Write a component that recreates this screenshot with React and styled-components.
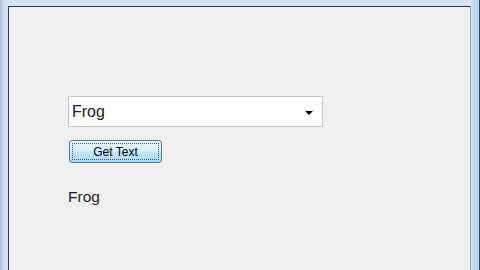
import React from 'react';
import styled, { createGlobalStyle } from 'styled-components';

const GlobalStyle = createGlobalStyle`
  html, body {
    margin: 0;
    padding: 0;
    width: 480px;
    height: 270px;
    overflow: hidden;
    background: #f0f0f0;
  }
`;

// Win7 window frame (light blue glass)
const Frame = styled.div`
  width: 480px;
  height: 270px;
  box-sizing: border-box;
  display: flex;
  padding: 6px 8px 0 8px;
  border-right: 1px solid #3d4a5a;
  background:
    linear-gradient(90deg, #aebdcf 0px, #c9dbef 3px, #d6e5f6 8px, #d6e5f6 calc(100% - 8px), #c3d9f1 calc(100% - 6px), #b6d2f0 100%);
`;

// client area
const Client = styled.div`
  flex: 1;
  display: flex;
  flex-direction: column;
  align-items: flex-start;
  background: #f0f0f0;
  border-top: 1px solid #2f3a47;
  border-left: 1px solid #2f3a47;
  border-right: 1px solid #9aa5b3;
  padding: 89px 0 0 59px;
`;

const Combo = styled.div`
  width: 255px;
  height: 31px;
  box-sizing: border-box;
  display: flex;
  align-items: center;
  justify-content: space-between;
  padding: 0 9px 0 3px;
  background: #fff;
  border: 1px solid #c3c3c3;
  font-family: "Liberation Sans", Arial, sans-serif;
  font-size: 16px;
  color: #1a1a1a;
`;

const Arrow = styled.span`
  width: 0;
  height: 0;
  border-left: 4px solid transparent;
  border-right: 4px solid transparent;
  border-top: 4px solid #000;
  margin-top: 2px;
`;

const Button = styled.button`
  margin: 13px 0 0 1px;
  width: 93px;
  height: 23px;
  box-sizing: border-box;
  position: relative;
  padding: 0;
  border: 1px solid #3c7fb1;
  border-radius: 3px;
  background: linear-gradient(180deg, #eaf6fd 0%, #d9f0fc 45%, #bee6fd 55%, #a7d9f5 100%);
  font-family: "Liberation Sans", Arial, sans-serif;
  font-size: 12px;
  color: #000;

  /* focus rectangle */
  &::after {
    content: '';
    position: absolute;
    inset: 2px;
    border: 1px dotted #555;
  }
`;

const Label = styled.div`
  margin-top: 25px;
  font-family: "Liberation Sans", Arial, sans-serif;
  font-size: 15.5px;
  color: #1e1e1e;
`;

export default function App() {
  return (
    <>
      <GlobalStyle />
      <Frame>
        <Client>
          <Combo>
            <span>Frog</span>
            <Arrow />
          </Combo>
          <Button>Get Text</Button>
          <Label>Frog</Label>
        </Client>
      </Frame>
    </>
  );
}
